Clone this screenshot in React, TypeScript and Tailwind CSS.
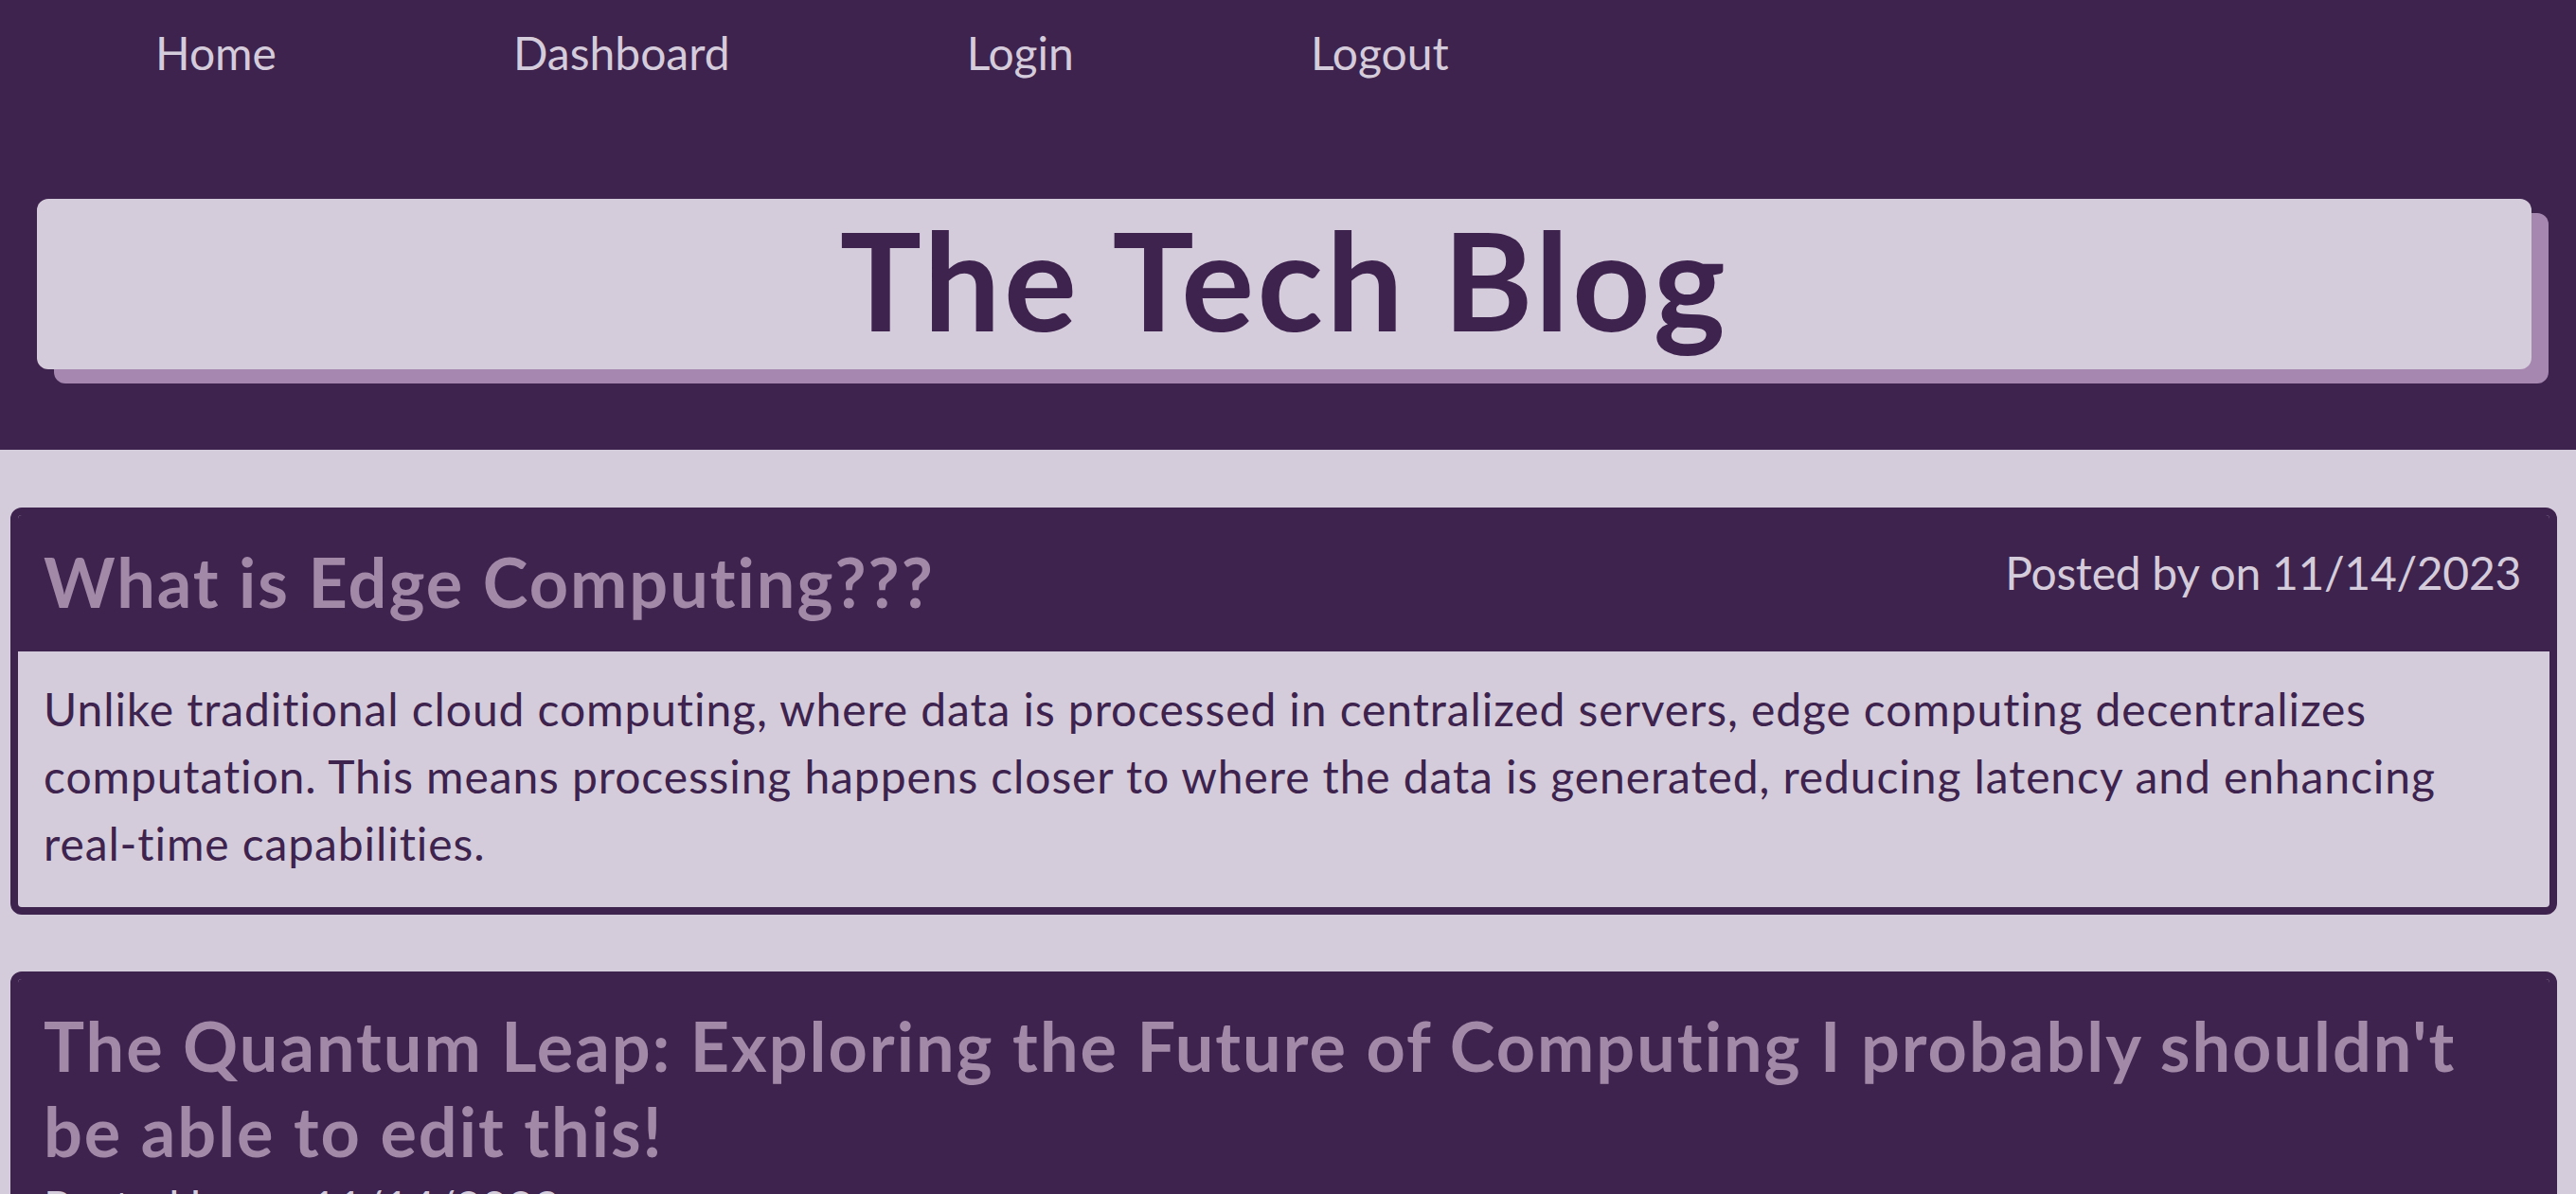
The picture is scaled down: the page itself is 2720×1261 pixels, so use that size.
const posts = [
  {
    title: "What is Edge Computing???",
    author: "",
    date: "11/14/2023",
    body: "Unlike traditional cloud computing, where data is processed in centralized servers, edge computing decentralizes computation. This means processing happens closer to where the data is generated, reducing latency and enhancing real-time capabilities.",
  },
  {
    title:
      "The Quantum Leap: Exploring the Future of Computing I probably shouldn't be able to edit this!",
    author: "",
    date: "11/14/2023",
    body: "Quantum computing harnesses the principles of quantum mechanics to perform calculations that would take classical computers thousands of years.",
  },
];

const links = ["Home", "Dashboard", "Login", "Logout"];

export default function App() {
  return (
    <div className="min-h-screen bg-[#d5ccdb] font-['Lato','Open_Sans',sans-serif] text-[#3d234e] [font-variant-ligatures:none]">
      <header className="bg-[#3d234e] pb-[85px]">
        <nav className="flex gap-[250px] pl-[164px] pt-[20px]">
          {links.map((l) => (
            <a key={l} href="#" className="text-[48px] leading-[72px] text-[#d5ccdb]">
              {l}
            </a>
          ))}
        </nav>
        {/* banner with offset shadow */}
        <div className="ml-[39px] mr-[47px] mt-[118px] h-[180px] rounded-[12px] bg-[#d5ccdb] pt-[13px] text-center shadow-[18px_15px_0_0_#a587b0]">
          <h1 className="text-[144px] font-bold leading-[144px] tracking-[3.5px] text-[#3d234e]">The Tech Blog</h1>
        </div>
      </header>

      <main className="flex flex-col gap-[60px] pl-[11px] pr-[20px] pt-[61px] pb-[60px]">
        {posts.map((p) => (
          <article
            key={p.title}
            className="overflow-hidden rounded-[12px] border-[8px] border-[#3d234e] bg-[#d5ccdb]"
          >
            <div className="flex flex-wrap items-start justify-between bg-[#3d234e] pl-[27px] pr-[30px] pt-[25px] pb-[29px]">
              <h2 className="text-[72px] font-bold leading-[90px] tracking-[2px] text-[#a289a8]">{p.title}</h2>
              <p className="text-[48px] leading-[72px] tracking-[-0.3px] text-[#d5ccdb]">
                Posted by {p.author} on {p.date}
              </p>
            </div>
            <p className="pl-[27px] pr-[30px] pt-[25px] pb-[32px] text-[48px] leading-[71px] tracking-[0.9px]">
              {p.body}
            </p>
          </article>
        ))}
      </main>
    </div>
  );
}
